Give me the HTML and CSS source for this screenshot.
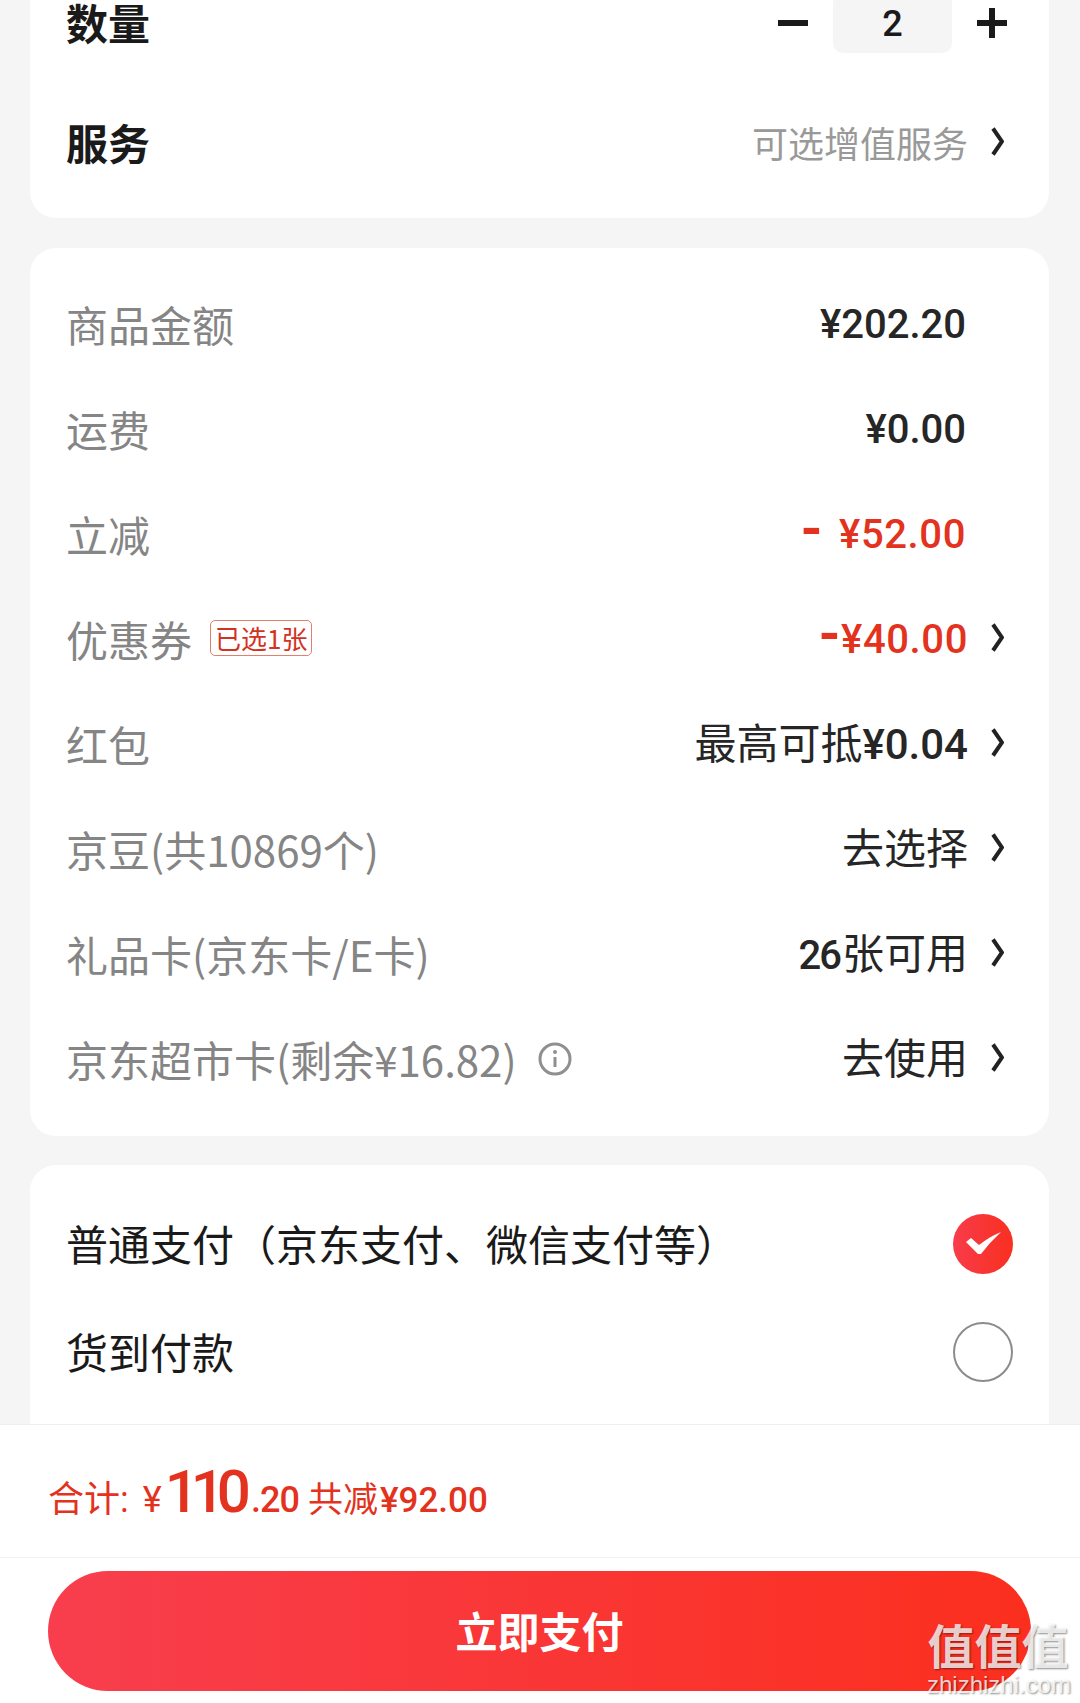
FILE: index.html
```html
<!DOCTYPE html>
<html lang="zh-CN">
<head>
  <meta charset="UTF-8">
  <title>订单结算</title>
  <link rel="stylesheet" href="styles.css">
</head>
<body>

  <main class="scroll">

    <!-- Quantity and service -->
    <section class="card card-top">
      <div class="row row-tall">
        <span class="title">数量</span>
        <div class="stepper">
          <svg class="step-icon" viewBox="0 0 30 30"><path d="M0 15H30" /></svg>
          <span class="step-value">2</span>
          <svg class="step-icon" viewBox="0 0 30 30"><path d="M0 15H30M15 0V30" /></svg>
        </div>
      </div>
      <div class="row row-tall">
        <span class="title">服务</span>
        <div class="right">
          <span class="hint">可选增值服务</span>
          <svg class="arrow" viewBox="0 0 13 29"><path d="M2 1.5L11 14.5L2 27.5" /></svg>
        </div>
      </div>
    </section>

    <!-- Price details -->
    <section class="card card-price">
      <div class="row no-arrow">
        <span class="label">商品金额</span>
        <span class="value">¥202.20</span>
      </div>
      <div class="row no-arrow">
        <span class="label">运费</span>
        <span class="value">¥0.00</span>
      </div>
      <div class="row no-arrow">
        <span class="label">立减</span>
        <span class="value red"><span class="dash dash-gap">-</span>¥52.00</span>
      </div>
      <div class="row">
        <div class="left">
          <span class="label">优惠券</span>
          <span class="tag">已选1张</span>
        </div>
        <div class="right">
          <span class="value red"><span class="dash">-</span>¥40.00</span>
          <svg class="arrow" viewBox="0 0 13 29"><path d="M2 1.5L11 14.5L2 27.5" /></svg>
        </div>
      </div>
      <div class="row">
        <span class="label">红包</span>
        <div class="right">
          <span class="value thin">最高可抵<b class="num">¥0.04</b></span>
          <svg class="arrow" viewBox="0 0 13 29"><path d="M2 1.5L11 14.5L2 27.5" /></svg>
        </div>
      </div>
      <div class="row">
        <span class="label">京豆(共10869个)</span>
        <div class="right">
          <span class="value thin">去选择</span>
          <svg class="arrow" viewBox="0 0 13 29"><path d="M2 1.5L11 14.5L2 27.5" /></svg>
        </div>
      </div>
      <div class="row">
        <span class="label">礼品卡(京东卡/E卡)</span>
        <div class="right">
          <span class="value thin"><b class="num num-tight">26</b>张可用</span>
          <svg class="arrow" viewBox="0 0 13 29"><path d="M2 1.5L11 14.5L2 27.5" /></svg>
        </div>
      </div>
      <div class="row">
        <div class="left">
          <span class="label">京东超市卡(剩余¥16.82)</span>
          <svg class="info" viewBox="0 0 34 34">
            <circle cx="17" cy="17" r="15" />
            <path d="M17 15V25" />
            <circle class="info-dot" cx="17" cy="10" r="2" />
          </svg>
        </div>
        <div class="right">
          <span class="value thin">去使用</span>
          <svg class="arrow" viewBox="0 0 13 29"><path d="M2 1.5L11 14.5L2 27.5" /></svg>
        </div>
      </div>
    </section>

    <!-- Payment method -->
    <section class="card card-pay">
      <div class="row row-pay">
        <span class="pay-name">普通支付（京东支付、微信支付等）</span>
        <svg class="radio" viewBox="0 0 60 60">
          <defs>
            <linearGradient id="radioRed">
              <stop offset="0" stop-color="#f83c4a" />
              <stop offset="1" stop-color="#f92f20" />
            </linearGradient>
          </defs>
          <circle cx="30" cy="30" r="30" fill="url(#radioRed)" />
          <path d="M13 28L18 24L26 31Q36 23 48 18Q37 28 28 40L25 40Z" fill="#fff" />
        </svg>
      </div>
      <div class="row row-pay">
        <span class="pay-name">货到付款</span>
        <svg class="radio" viewBox="0 0 60 60"><circle cx="30" cy="30" r="29" fill="#fff" stroke="#8c8c8c" stroke-width="2" /></svg>
      </div>
    </section>

  </main>

  <footer class="footer">
    <div class="total">
      <span class="total-label">合计:</span>
      <span class="total-yen">¥</span><span class="total-big">110</span><span class="total-small">.20</span>
      <span class="total-off">共减<span class="num-off">¥92.00</span></span>
    </div>
    <div class="pay-bar">
      <button class="pay-btn">立即支付</button>
    </div>
  </footer>

  <!-- Site watermark -->
  <div class="watermark">
    <div class="mark-name">值值值</div>
    <div class="mark-url">zhizhizhi.com</div>
  </div>

</body>
</html>
```

FILE: styles.css
```css
body {
  margin: 0;
  height: 1703px;
  overflow: hidden;
  display: flex;
  flex-direction: column;
  position: relative;
  background: #f5f5f5;
  color: #1a1a1a;
  font-family: "Noto Sans CJK SC", "Noto Sans", sans-serif;
}

.scroll {
  flex: 1;
  min-height: 0;
  overflow: hidden;
}

/* Cards */
.card {
  margin: 0 31px 29px 30px;
  padding: 0 45px 0 36px;
  background: #fff;
  border-radius: 26px;
}

.card-top {
  margin-top: -35px;
  margin-bottom: 30px;
  padding-bottom: 13px;
}

.card-price {
  padding-top: 26px;
  padding-bottom: 22px;
}

.card-pay {
  padding-top: 25px;
  padding-right: 36px;
  padding-bottom: 60px;
}

/* Rows */
.row {
  display: flex;
  align-items: center;
  justify-content: space-between;
  height: 105px;
}

.row-tall {
  height: 120px;
}

.row-pay {
  height: 108px;
}

.no-arrow {
  padding-right: 38px;
}

.left,
.right {
  display: flex;
  align-items: center;
}

.title {
  margin-bottom: 8px;
  font-size: 42px;
  font-weight: 700;
  color: #1a1a1a;
}

.label {
  margin-bottom: 6px;
  font-size: 42px;
  color: #858585;
}

.hint {
  margin-bottom: 6px;
  font-size: 36px;
  color: #999;
}

.value {
  font-family: Roboto, "Noto Sans CJK SC", sans-serif;
  font-size: 40px;
  font-weight: 500;
  color: #262626;
  position: relative;
  top: -2px;
}

.value.thin {
  font-size: 42px;
  font-weight: 400;
  top: -6px;
}

.num {
  font-weight: 500;
}

.num-tight {
  font-size: 40px;
  letter-spacing: -2px;
  margin-right: 2px;
}

.red {
  color: #e3321d;
  letter-spacing: 0.6px;
}

.dash {
  font-size: 56px;
  line-height: 0;
  font-weight: 700;
}

.dash-gap {
  margin-right: 16px;
}

.arrow {
  width: 13px;
  height: 29px;
  margin-left: 23px;
  position: relative;
  top: -4px;
  fill: none;
  stroke: #222;
  stroke-width: 4;
}

.tag {
  margin-left: 18px;
  padding: 0 4px;
  height: 34px;
  line-height: 33px;
  font-size: 26px;
  color: #d2321f;
  border: 1px solid #e2806e;
  border-radius: 5px;
  position: relative;
  top: -4px;
}

.info {
  width: 34px;
  height: 34px;
  margin-left: 21px;
  position: relative;
  top: -3px;
  fill: none;
  stroke: #8f8f8f;
  stroke-width: 3;
}

.info-dot {
  fill: #8f8f8f;
  stroke: none;
}

/* Quantity stepper */
.stepper {
  display: flex;
  align-items: center;
  gap: 25px;
  margin-right: -3px;
  margin-top: -4px;
}

.step-icon {
  width: 30px;
  height: 30px;
  fill: none;
  stroke: #1a1a1a;
  stroke-width: 6;
}

.step-value {
  width: 119px;
  height: 60px;
  line-height: 62px;
  text-align: center;
  font-family: Roboto, sans-serif;
  font-size: 36px;
  font-weight: 500;
  background: #f5f5f5;
  border-radius: 10px;
}

/* Payment method */
.pay-name {
  margin-bottom: 4px;
  font-size: 42px;
  color: #1a1a1a;
}

.radio {
  width: 60px;
  height: 60px;
}

/* Bottom bar */
.footer {
  flex: none;
  background: #fff;
  border-top: 1px solid #efefef;
}

.total {
  height: 133px;
  box-sizing: border-box;
  padding: 31px 0 0 48px;
  display: flex;
  align-items: baseline;
  color: #e3321d;
  font-family: Roboto, "Noto Sans CJK SC", sans-serif;
  border-bottom: 1px solid #f2f2f2;
}

.total-label {
  font-size: 36px;
}

.total-yen {
  margin-left: 14px;
  font-size: 36px;
}

.total-big {
  margin-left: 3px;
  font-size: 60px;
  font-weight: 500;
  letter-spacing: -8px;
}

.total-small {
  margin-left: 8px;
  font-size: 36px;
  font-weight: 500;
  letter-spacing: -1px;
}

.total-off {
  margin-left: 9px;
  font-size: 35px;
}

.num-off {
  margin-left: 2px;
  font-weight: 500;
}

.pay-bar {
  padding: 13px 49px 12px 48px;
}

.pay-btn {
  display: block;
  width: 100%;
  height: 120px;
  padding-bottom: 4px;
  border: none;
  border-radius: 60px;
  background: linear-gradient(90deg, #f83e4e, #fb2f1e);
  color: #fff;
  font-family: "Noto Sans CJK SC", sans-serif;
  font-size: 42px;
  font-weight: 700;
}

/* Watermark lies over the button */
.watermark {
  position: absolute;
  right: 11px;
  bottom: 6px;
  width: 142px;
  text-align: center;
  color: rgba(255, 255, 255, 0.78);
  text-shadow: 1px 1px 2px rgba(0, 0, 0, 0.45);
}

.mark-name {
  font-size: 47px;
  font-weight: 700;
  line-height: 50px;
  white-space: nowrap;
}

.mark-url {
  font-family: "Liberation Sans", sans-serif;
  font-size: 24px;
  line-height: 24px;
  margin-top: 4px;
  white-space: nowrap;
}
```
